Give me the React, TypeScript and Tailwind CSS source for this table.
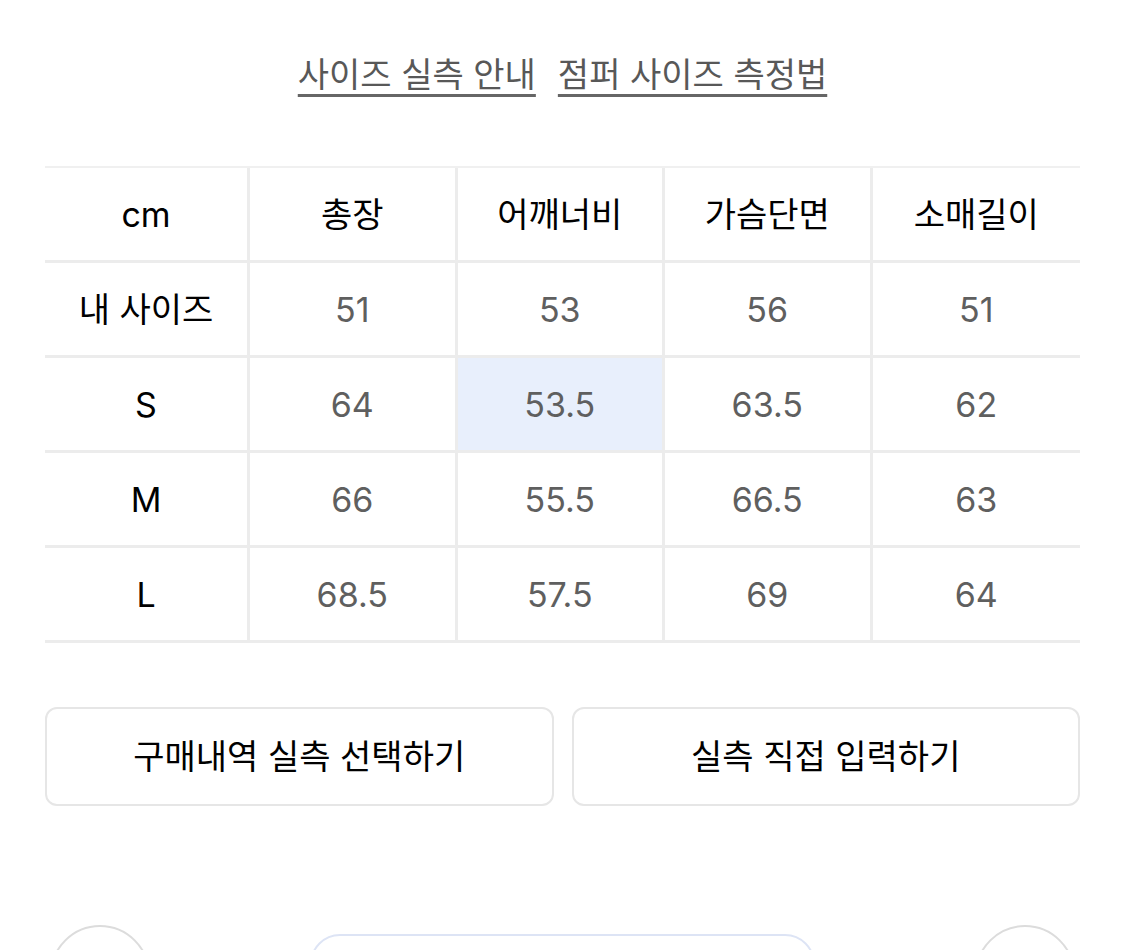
const font = { fontFamily: 'Inter, "Noto Sans CJK KR", sans-serif' }

const headers = ['cm', '총장', '어깨너비', '가슴단면', '소매길이']

const rows: { label: string; values: string[]; highlight?: number }[] = [
  { label: '내 사이즈', values: ['51', '53', '56', '51'] },
  { label: 'S', values: ['64', '53.5', '63.5', '62'], highlight: 1 },
  { label: 'M', values: ['66', '55.5', '66.5', '63'] },
  { label: 'L', values: ['68.5', '57.5', '69', '64'] },
]

function Cell({ children, last, value, active }: { children: React.ReactNode; last?: boolean; value?: boolean; active?: boolean }) {
  return (
    <div
      className={`h-[95px] flex items-center justify-center border-b-[3px] border-[#ececec] ${last ? '' : 'border-r-[3px]'} ${
        active ? 'bg-[#e8effc]' : 'bg-white'
      } ${value ? 'text-[34px] text-[#5f5f5f]' : 'text-[34px] text-black'}`}
    >
      {children}
    </div>
  )
}

export default function App() {
  return (
    <div className="w-[1125px] h-[950px] overflow-hidden bg-white relative" style={font}>
      <div className="flex justify-center gap-[22px] pt-[49px]">
        <span className="text-[34px] text-[#585858] underline decoration-[3px] underline-offset-[7px] decoration-[#666]">사이즈 실측 안내</span>
        <span className="text-[34px] text-[#585858] underline decoration-[3px] underline-offset-[7px] decoration-[#666]">점퍼 사이즈 측정법</span>
      </div>

      <div className="mx-[45px] mt-[66px] border-t-2 border-[#f0f0f0] grid grid-cols-[205px_1fr_1fr_1fr_1fr]">
        {headers.map((h, i) => (
          <Cell key={h} last={i === headers.length - 1}>
            {h}
          </Cell>
        ))}
        {rows.map((r) => (
          <div key={r.label} className="contents">
            <Cell>{r.label}</Cell>
            {r.values.map((v, i) => (
              <Cell key={i} value last={i === r.values.length - 1} active={r.highlight === i}>
                {v}
              </Cell>
            ))}
          </div>
        ))}
      </div>

      <div className="mx-[45px] mt-[64px] grid grid-cols-2 gap-[18px]">
        <button className="h-[99px] rounded-[12px] border-2 border-[#e6e6e6] bg-white text-[34px] text-black">구매내역 실측 선택하기</button>
        <button className="h-[99px] rounded-[12px] border-2 border-[#e6e6e6] bg-white text-[34px] text-black">실측 직접 입력하기</button>
      </div>

      <div className="absolute left-[50px] top-[925px] w-[100px] h-[100px] rounded-full border-2 border-[#dcdcdc]" />
      <div className="absolute left-[310px] top-[934px] w-[505px] h-[80px] rounded-[30px] border-2 border-[#dde4f5]" />
      <div className="absolute left-[975px] top-[925px] w-[100px] h-[100px] rounded-full border-2 border-[#dcdcdc]" />
    </div>
  )
}
